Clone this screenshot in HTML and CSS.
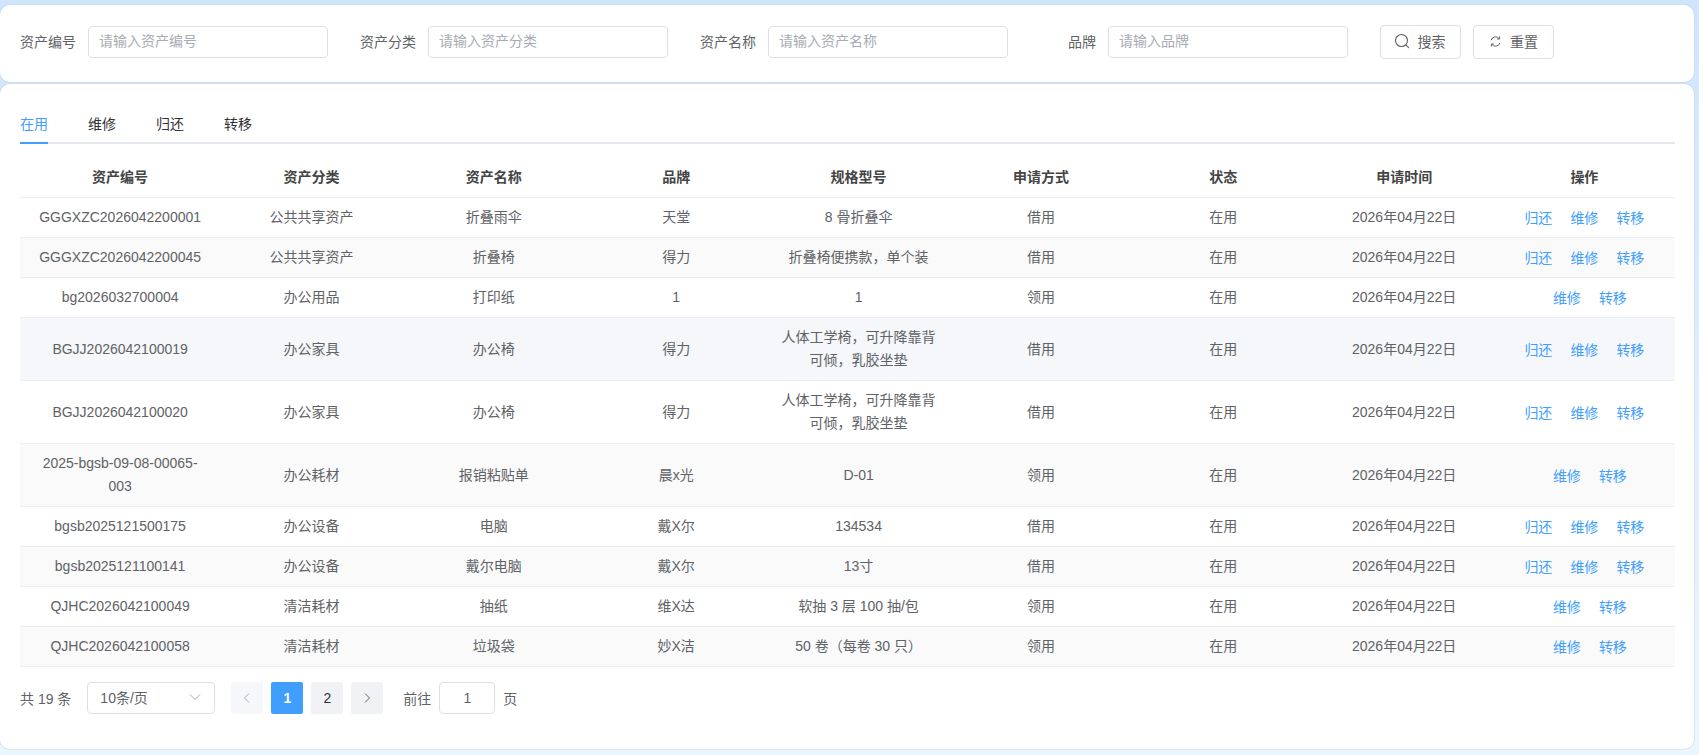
FILE: index.html
```html
<!DOCTYPE html>
<html lang="zh-CN">
<head>
    <meta charset="UTF-8">
    <meta name="viewport" content="width=device-width, initial-scale=1.0">
    <title>资产管理</title>
    <link rel="stylesheet" href="styles.css">
</head>
<body>
    <!-- Search form -->
    <section class="card search-card">
        <div class="form-item">
            <label class="form-label">资产编号</label>
            <input class="form-input" type="text" placeholder="请输入资产编号">
        </div>
        <div class="form-item">
            <label class="form-label">资产分类</label>
            <input class="form-input" type="text" placeholder="请输入资产分类">
        </div>
        <div class="form-item">
            <label class="form-label">资产名称</label>
            <input class="form-input" type="text" placeholder="请输入资产名称">
        </div>
        <div class="form-item">
            <label class="form-label">品牌</label>
            <input class="form-input" type="text" placeholder="请输入品牌">
        </div>
        <div class="form-buttons">
            <button class="btn" type="button">
                <svg class="btn-icon" viewBox="0 0 16 16" fill="none" stroke="#606266" stroke-width="1.1">
                    <circle cx="7.5" cy="7.5" r="6"/>
                    <path d="M11.9 11.9L14.6 14.6" stroke-linecap="round"/>
                </svg>
                搜索
            </button>
            <button class="btn" type="button">
                <svg class="btn-icon btn-icon-small" viewBox="0 0 16 16" fill="none" stroke="#606266" stroke-width="1.2">
                    <path d="M2.6 6.4A5.6 5.6 0 0 1 12.6 4.6"/>
                    <path d="M13.4 9.6A5.6 5.6 0 0 1 3.4 11.4"/>
                    <path d="M13 1.8V4.9H9.9" stroke-linejoin="round"/>
                    <path d="M3 14.2V11.1H6.1" stroke-linejoin="round"/>
                </svg>
                重置
            </button>
        </div>
    </section>

    <!-- Asset list -->
    <section class="card list-card">
        <div class="tabs">
            <span class="tab tab-active">在用</span>
            <span class="tab">维修</span>
            <span class="tab">归还</span>
            <span class="tab">转移</span>
        </div>

        <table class="asset-table">
            <colgroup>
                <col class="col-code">
                <col class="col-normal">
                <col class="col-normal">
                <col class="col-normal">
                <col class="col-normal">
                <col class="col-normal">
                <col class="col-normal">
                <col class="col-time">
                <col class="col-ops">
            </colgroup>
            <thead>
                <tr>
                    <th>资产编号</th>
                    <th>资产分类</th>
                    <th>资产名称</th>
                    <th>品牌</th>
                    <th>规格型号</th>
                    <th>申请方式</th>
                    <th>状态</th>
                    <th>申请时间</th>
                    <th>操作</th>
                </tr>
            </thead>
            <tbody>
                <tr>
                    <td>GGGXZC2026042200001</td>
                    <td>公共共享资产</td>
                    <td>折叠雨伞</td>
                    <td>天堂</td>
                    <td>8 骨折叠伞</td>
                    <td>借用</td>
                    <td>在用</td>
                    <td>2026年04月22日</td>
                    <td><a class="op-link">归还</a><a class="op-link">维修</a><a class="op-link">转移</a></td>
                </tr>
                <tr>
                    <td>GGGXZC2026042200045</td>
                    <td>公共共享资产</td>
                    <td>折叠椅</td>
                    <td>得力</td>
                    <td>折叠椅便携款，单个装</td>
                    <td>借用</td>
                    <td>在用</td>
                    <td>2026年04月22日</td>
                    <td><a class="op-link">归还</a><a class="op-link">维修</a><a class="op-link">转移</a></td>
                </tr>
                <tr>
                    <td>bg2026032700004</td>
                    <td>办公用品</td>
                    <td>打印纸</td>
                    <td>1</td>
                    <td>1</td>
                    <td>领用</td>
                    <td>在用</td>
                    <td>2026年04月22日</td>
                    <td class="ops-short"><a class="op-link">维修</a><a class="op-link">转移</a></td>
                </tr>
                <tr class="row-hover">
                    <td>BGJJ2026042100019</td>
                    <td>办公家具</td>
                    <td>办公椅</td>
                    <td>得力</td>
                    <td>人体工学椅，可升降靠背可倾，乳胶坐垫</td>
                    <td>借用</td>
                    <td>在用</td>
                    <td>2026年04月22日</td>
                    <td><a class="op-link">归还</a><a class="op-link">维修</a><a class="op-link">转移</a></td>
                </tr>
                <tr>
                    <td>BGJJ2026042100020</td>
                    <td>办公家具</td>
                    <td>办公椅</td>
                    <td>得力</td>
                    <td>人体工学椅，可升降靠背可倾，乳胶坐垫</td>
                    <td>借用</td>
                    <td>在用</td>
                    <td>2026年04月22日</td>
                    <td><a class="op-link">归还</a><a class="op-link">维修</a><a class="op-link">转移</a></td>
                </tr>
                <tr>
                    <td>2025-bgsb-09-08-00065-003</td>
                    <td>办公耗材</td>
                    <td>报销粘贴单</td>
                    <td>晨x光</td>
                    <td>D-01</td>
                    <td>领用</td>
                    <td>在用</td>
                    <td>2026年04月22日</td>
                    <td class="ops-short"><a class="op-link">维修</a><a class="op-link">转移</a></td>
                </tr>
                <tr>
                    <td>bgsb2025121500175</td>
                    <td>办公设备</td>
                    <td>电脑</td>
                    <td>戴X尔</td>
                    <td>134534</td>
                    <td>借用</td>
                    <td>在用</td>
                    <td>2026年04月22日</td>
                    <td><a class="op-link">归还</a><a class="op-link">维修</a><a class="op-link">转移</a></td>
                </tr>
                <tr>
                    <td>bgsb2025121100141</td>
                    <td>办公设备</td>
                    <td>戴尔电脑</td>
                    <td>戴X尔</td>
                    <td>13寸</td>
                    <td>借用</td>
                    <td>在用</td>
                    <td>2026年04月22日</td>
                    <td><a class="op-link">归还</a><a class="op-link">维修</a><a class="op-link">转移</a></td>
                </tr>
                <tr>
                    <td>QJHC2026042100049</td>
                    <td>清洁耗材</td>
                    <td>抽纸</td>
                    <td>维X达</td>
                    <td>软抽 3 层 100 抽/包</td>
                    <td>领用</td>
                    <td>在用</td>
                    <td>2026年04月22日</td>
                    <td class="ops-short"><a class="op-link">维修</a><a class="op-link">转移</a></td>
                </tr>
                <tr>
                    <td>QJHC2026042100058</td>
                    <td>清洁耗材</td>
                    <td>垃圾袋</td>
                    <td>妙X洁</td>
                    <td>50 卷（每卷 30 只）</td>
                    <td>领用</td>
                    <td>在用</td>
                    <td>2026年04月22日</td>
                    <td class="ops-short"><a class="op-link">维修</a><a class="op-link">转移</a></td>
                </tr>
            </tbody>
        </table>

        <!-- Pagination -->
        <div class="pagination">
            <span class="page-total">共 19 条</span>
            <div class="page-size">
                <span>10条/页</span>
                <svg class="page-arrow" viewBox="0 0 12 12" fill="none" stroke="#a8abb2" stroke-width="1">
                    <path d="M1 3.5L6 8.5L11 3.5"/>
                </svg>
            </div>
            <div class="page-list">
                <span class="page-btn page-disabled">
                    <svg class="page-chevron" viewBox="0 0 12 12" fill="none" stroke="#a8abb2" stroke-width="1"><path d="M8 1.5L3.5 6L8 10.5"/></svg>
                </span>
                <span class="page-btn page-active">1</span>
                <span class="page-btn">2</span>
                <span class="page-btn">
                    <svg class="page-chevron" viewBox="0 0 12 12" fill="none" stroke="#606266" stroke-width="1"><path d="M4 1.5L8.5 6L4 10.5"/></svg>
                </span>
            </div>
            <div class="page-jump">
                <span>前往</span>
                <input class="page-input" type="text" value="1">
                <span>页</span>
            </div>
        </div>
    </section>
</body>
</html>
```

FILE: styles.css
```css
* {
    margin: 0;
    padding: 0;
    box-sizing: border-box;
}

html,
body {
    height: 100%;
    overflow: hidden;
}

body {
    font-family: "Liberation Sans", "Noto Sans CJK SC", sans-serif;
    font-size: 14px;
    color: #606266;
    background: linear-gradient(180deg, #cfe5fc 0%, #ecf6fe 100%);
    padding: 5px 5px 6px 0;
    display: flex;
    flex-direction: column;
    gap: 2px;
}

.card {
    background-color: #fff;
    border-radius: 10px;
    box-shadow: 0 0 0 1px rgba(200, 212, 228, 0.45);
}

/* Search form */
.search-card {
    height: 77px;
    padding: 21px 20px 0;
    display: flex;
    align-items: flex-start;
    gap: 32px;
}

.form-item {
    display: flex;
    align-items: center;
    gap: 12px;
}

.form-label {
    width: 56px;
    padding-bottom: 2px;
    text-align: right;
    white-space: nowrap;
}

.form-input {
    width: 240px;
    height: 32px;
    padding: 0 10px 2px;
    border: 1px solid #dcdfe6;
    border-radius: 4px;
    font: inherit;
    color: #606266;
    outline: none;
}

.form-input::placeholder {
    color: #a8abb2;
}

.form-buttons {
    display: flex;
    gap: 12px;
    margin-top: -1px;
}

.btn {
    width: 81px;
    height: 34px;
    padding-bottom: 2px;
    display: flex;
    align-items: center;
    justify-content: center;
    gap: 8px;
    background: #fff;
    border: 1px solid #dcdfe6;
    border-radius: 4px;
    font: inherit;
    color: #606266;
}

.btn-icon {
    width: 16px;
    height: 16px;
    margin-left: -2px;
}

.btn-icon-small {
    width: 13px;
    height: 13px;
    margin-left: 0;
}

/* List card */
.list-card {
    flex: 1;
    padding: 20px 19px 0 20px;
}

.tabs {
    display: flex;
    height: 40px;
    border-bottom: 2px solid #e4e7ed;
}

.tab {
    position: relative;
    height: 38px;
    line-height: 41px;
    margin-right: 40px;
    color: #303133;
}

.tab-active {
    color: #409eff;
}

.tab-active::after {
    content: "";
    position: absolute;
    left: 0;
    right: 0;
    bottom: -2px;
    height: 2px;
    background-color: #409eff;
}

/* Table */
.asset-table {
    width: 100%;
    margin-top: 14px;
    border-collapse: collapse;
    table-layout: fixed;
}

.col-code {
    width: 200px;
}

.col-normal {
    width: 182.2px;
}

.col-time {
    width: 179px;
}

.col-ops {
    width: 181px;
}

.asset-table th,
.asset-table td {
    padding: 8px 10px;
    line-height: 23px;
    text-align: center;
    border-bottom: 1px solid #ebeef5;
}

.asset-table td:first-child {
    padding: 8px 15px;
}

.asset-table th {
    font-weight: 700;
    color: #444;
}

.asset-table tbody tr:nth-child(even) {
    background-color: #fafafa;
}

.asset-table tbody tr.row-hover {
    background-color: #f5f7fa;
}

.asset-table td.ops-short {
    padding-left: 21px;
}

.op-link {
    color: #409eff;
    position: relative;
    top: 1px;
}

.op-link + .op-link {
    margin-left: 18px;
}

/* Pagination */
.pagination {
    display: flex;
    align-items: center;
    margin-top: 15px;
    height: 32px;
}

.page-total {
    margin-right: 16px;
}

.page-size {
    width: 128px;
    height: 32px;
    padding: 0 13px 2px 12px;
    display: flex;
    align-items: center;
    justify-content: space-between;
    border: 1px solid #dcdfe6;
    border-radius: 4px;
}

.page-arrow {
    width: 12px;
    height: 12px;
}

.page-list {
    display: flex;
    gap: 8px;
    margin-left: 16px;
}

.page-btn {
    width: 32px;
    height: 32px;
    display: flex;
    align-items: center;
    justify-content: center;
    border-radius: 2px;
    background-color: #f0f2f5;
    color: #303133;
}

.page-disabled {
    background-color: #f5f7fa;
}

.page-active {
    background-color: #409eff;
    color: #fff;
    font-weight: 700;
}

.page-chevron {
    width: 12px;
    height: 12px;
}

.page-jump {
    display: flex;
    align-items: center;
    gap: 8px;
    margin-left: 20px;
}

.page-input {
    width: 56px;
    height: 32px;
    border: 1px solid #dcdfe6;
    border-radius: 4px;
    text-align: center;
    font: inherit;
    color: #606266;
    outline: none;
}
```
